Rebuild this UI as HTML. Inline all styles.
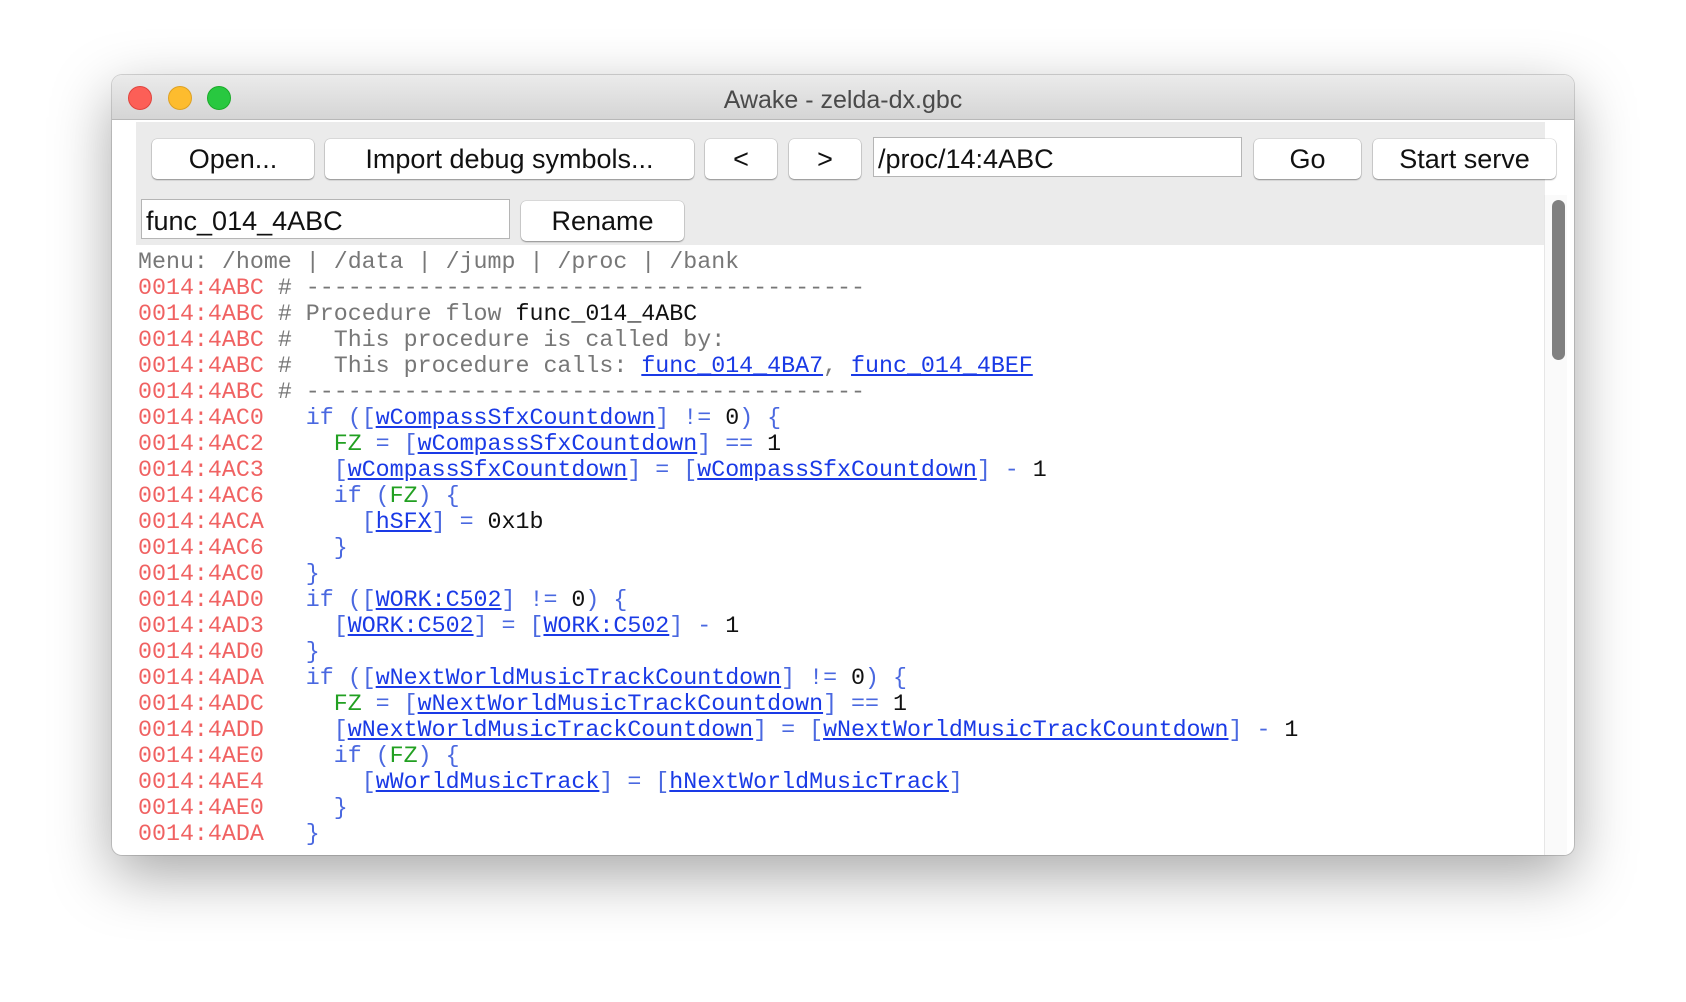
<!DOCTYPE html>
<html><head><meta charset="utf-8"><style>
html,body{margin:0;padding:0;width:1686px;height:1002px;background:#fff;overflow:hidden}
.win{position:absolute;left:112px;top:75px;width:1462px;height:780px;border-radius:10px;background:#fff;box-shadow:0 20px 60px rgba(0,0,0,.35),0 0 0 1px rgba(0,0,0,.15);overflow:hidden}
.tb{position:absolute;left:0;top:0;right:0;height:44px;background:linear-gradient(#ebebeb,#d5d5d5);border-bottom:1px solid #b8b8b8;font:25px "Liberation Sans",sans-serif;color:#4a4a4a;text-align:center;line-height:50px}
.dot{position:absolute;top:11px;width:24px;height:24px;border-radius:50%}
.panel{position:absolute;left:24px;top:47px;width:1409px;height:123px;background:#ebebeb}
.btn{position:absolute;height:40px;background:#fff;border-radius:5px;box-shadow:0 1px 1.5px rgba(0,0,0,.35),0 0 0 .5px rgba(0,0,0,.15);font:27px "Liberation Sans",sans-serif;text-align:center;line-height:40px;color:#111}
.inp{position:absolute;height:40px;background:#fff;border:1px solid #b5b5b5;box-sizing:border-box;font:27px "Liberation Sans",sans-serif;line-height:42px;padding-left:4px;color:#111}
.code{position:absolute;left:26px;top:170px;width:1407px;bottom:0;background:#fff;overflow:hidden}
pre{margin:0;position:absolute;left:0;top:4px;font:23.3px/26px "Liberation Mono",monospace;color:#111}
.a{color:#f06262}.c{color:#777}.k{color:#4a68e0}.l{color:#1a3ae6;text-decoration:underline}.g{color:#22a022}
.sb{position:absolute;left:1432px;top:120px;width:22px;bottom:0;background:#fafafa;border-left:1px solid #e6e6e6}
.th{position:absolute;left:7px;top:5px;width:13px;height:160px;border-radius:7px;background:#808080}
</style></head><body>
<div class="win">
<div class="tb">Awake - zelda-dx.gbc
<div class="dot" style="left:16px;background:#fc5f57;border:1px solid #e0443e;box-sizing:border-box"></div>
<div class="dot" style="left:56px;background:#fdbc2e;border:1px solid #dea123;box-sizing:border-box"></div>
<div class="dot" style="left:95px;background:#28c840;border:1px solid #1aab29;box-sizing:border-box"></div>
</div>
<div class="panel"></div>
<div class="btn" style="left:40px;top:64px;width:162px">Open...</div>
<div class="btn" style="left:213px;top:64px;width:369px">Import debug symbols...</div>
<div class="btn" style="left:593px;top:64px;width:72px">&lt;</div>
<div class="btn" style="left:677px;top:64px;width:72px">&gt;</div>
<div class="inp" style="left:761px;top:62px;width:369px">/proc/14:4ABC</div>
<div class="btn" style="left:1142px;top:64px;width:107px">Go</div>
<div class="btn" style="left:1261px;top:64px;width:183px">Start serve</div>
<div class="inp" style="left:29px;top:124px;width:369px">func_014_4ABC</div>
<div class="btn" style="left:409px;top:126px;width:163px">Rename</div>
<div class="code"><pre><span class="c">Menu: /home | /data | /jump | /proc | /bank</span>
<span class="a">0014:4ABC</span> <span class="c"># ----------------------------------------</span>
<span class="a">0014:4ABC</span> <span class="c"># Procedure flow </span>func_014_4ABC
<span class="a">0014:4ABC</span> <span class="c">#   This procedure is called by:</span>
<span class="a">0014:4ABC</span> <span class="c">#   This procedure calls: </span><span class="l">func_014_4BA7</span><span class="c">, </span><span class="l">func_014_4BEF</span>
<span class="a">0014:4ABC</span> <span class="c"># ----------------------------------------</span>
<span class="a">0014:4AC0</span>   <span class="k">if ([</span><span class="l">wCompassSfxCountdown</span><span class="k">] != </span>0<span class="k">) {</span>
<span class="a">0014:4AC2</span>     <span class="g">FZ</span><span class="k"> = [</span><span class="l">wCompassSfxCountdown</span><span class="k">] == </span>1
<span class="a">0014:4AC3</span>     <span class="k">[</span><span class="l">wCompassSfxCountdown</span><span class="k">] = [</span><span class="l">wCompassSfxCountdown</span><span class="k">] - </span>1
<span class="a">0014:4AC6</span>     <span class="k">if (</span><span class="g">FZ</span><span class="k">) {</span>
<span class="a">0014:4ACA</span>       <span class="k">[</span><span class="l">hSFX</span><span class="k">] = </span>0x1b
<span class="a">0014:4AC6</span>     <span class="k">}</span>
<span class="a">0014:4AC0</span>   <span class="k">}</span>
<span class="a">0014:4AD0</span>   <span class="k">if ([</span><span class="l">WORK:C502</span><span class="k">] != </span>0<span class="k">) {</span>
<span class="a">0014:4AD3</span>     <span class="k">[</span><span class="l">WORK:C502</span><span class="k">] = [</span><span class="l">WORK:C502</span><span class="k">] - </span>1
<span class="a">0014:4AD0</span>   <span class="k">}</span>
<span class="a">0014:4ADA</span>   <span class="k">if ([</span><span class="l">wNextWorldMusicTrackCountdown</span><span class="k">] != </span>0<span class="k">) {</span>
<span class="a">0014:4ADC</span>     <span class="g">FZ</span><span class="k"> = [</span><span class="l">wNextWorldMusicTrackCountdown</span><span class="k">] == </span>1
<span class="a">0014:4ADD</span>     <span class="k">[</span><span class="l">wNextWorldMusicTrackCountdown</span><span class="k">] = [</span><span class="l">wNextWorldMusicTrackCountdown</span><span class="k">] - </span>1
<span class="a">0014:4AE0</span>     <span class="k">if (</span><span class="g">FZ</span><span class="k">) {</span>
<span class="a">0014:4AE4</span>       <span class="k">[</span><span class="l">wWorldMusicTrack</span><span class="k">] = [</span><span class="l">hNextWorldMusicTrack</span><span class="k">]</span>
<span class="a">0014:4AE0</span>     <span class="k">}</span>
<span class="a">0014:4ADA</span>   <span class="k">}</span></pre></div>
<div class="sb"><div class="th"></div></div>
</div>
</body></html>
